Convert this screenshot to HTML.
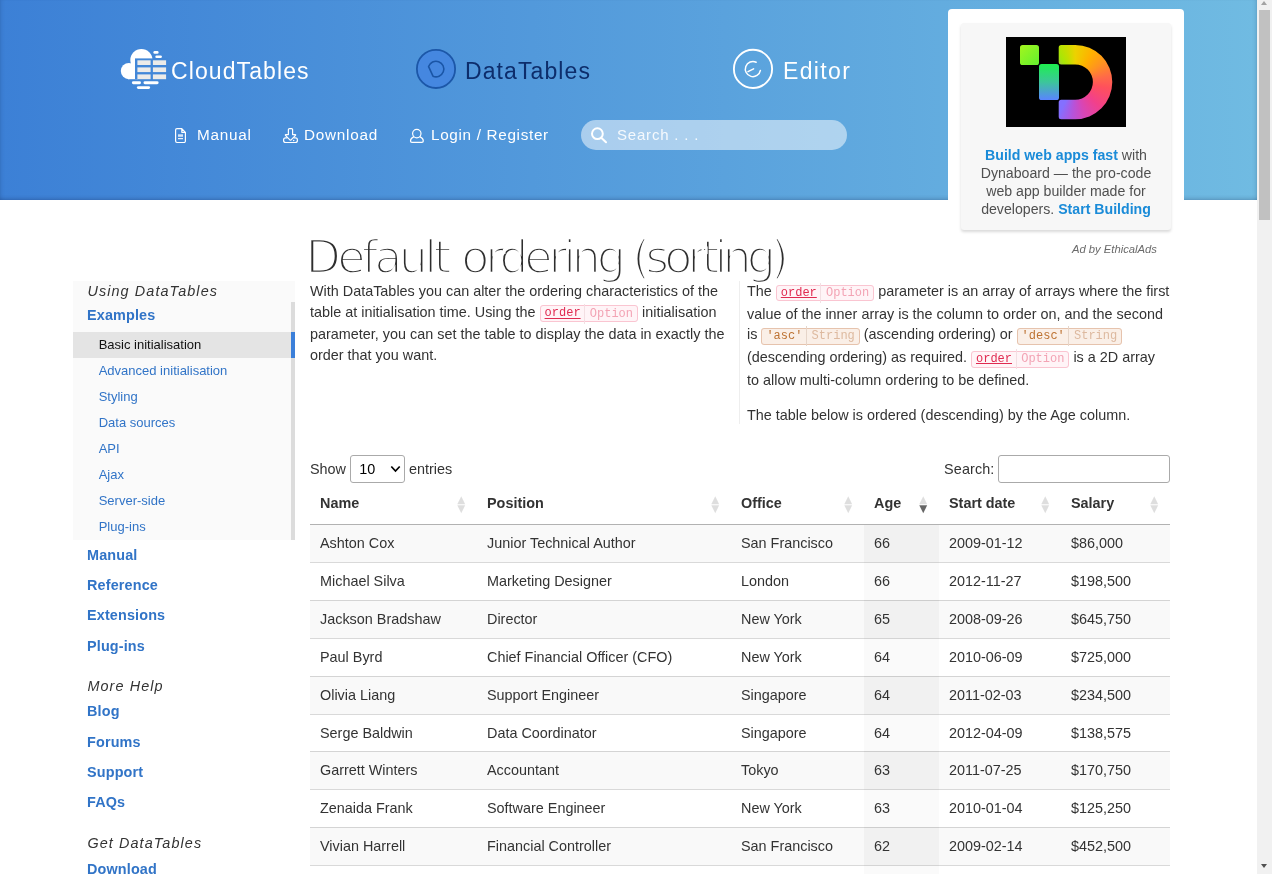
<!DOCTYPE html>
<html lang="en">
<head>
<meta charset="utf-8">
<title>DataTables example - Default ordering (sorting)</title>
<style>
*{box-sizing:border-box}
html,body{margin:0;padding:0}
body{width:1272px;height:874px;overflow:hidden;position:relative;background:#fff;
  font-family:"Liberation Sans",Arial,Helvetica,sans-serif;font-size:14.4px;line-height:20.88px;color:#333}
a{color:#3174c7;text-decoration:none}
#page{position:absolute;left:0;top:0;width:1257px;height:874px;overflow:hidden;background:#fff;will-change:transform}

/* header */
#hdr{position:absolute;left:0;top:0;width:1257px;height:200px;
  background:linear-gradient(to right,#3c80d6 0%,#70bbe2 100%);
  box-shadow:inset 0 -4px 4px -3px rgba(0,0,40,.22),inset 4px 0 4px -3px rgba(0,0,40,.12),inset -4px 0 4px -3px rgba(0,0,40,.15)}
.logo{position:absolute;color:#fff;font-size:23px;letter-spacing:1.1px;line-height:30px;white-space:nowrap}
.logo svg{position:absolute}
.nav{position:absolute;top:124px;color:#fff;font-size:15.3px;letter-spacing:.75px;line-height:22px;white-space:nowrap}
.nav svg{position:absolute}
#hsearch{position:absolute;left:581px;top:120px;width:266px;height:30px;border-radius:15px;background:rgba(255,255,255,.5);
  color:rgba(255,255,255,.88);font-size:15px;letter-spacing:.8px;line-height:30px;padding-left:36px}
#hsearch svg{position:absolute;left:8px;top:6px}


/* sidebar */
#side{position:absolute;left:73px;top:281px;width:222px}
#side .grp{background:#fafafa;position:relative}
#side .grp .it{margin-top:-1.3px}
#side .grp div.sub{margin-top:1.1px}
#side h3{margin:0;font-weight:normal;font-style:italic;font-size:14.4px;letter-spacing:1.1px;line-height:20.88px;padding:0 0 0 14.4px;color:#333}
#side .it{display:block;font-weight:bold;font-size:14.4px;line-height:20.88px;padding:4.73px 0 4.73px 14px;letter-spacing:.15px;color:#3174c7}
#side .bar{position:absolute;right:0;top:21px;bottom:0;width:4px;background:#dcdcdc}
#side .sub a{display:block;font-size:13px;line-height:18.2px;padding:3.9px 0 3.9px 25.7px;color:#3174c7}
#side .sub a.act{background:#e4e4e4;color:#111;position:relative}
#side .sub a.act:after{content:"";position:absolute;right:0;top:0;bottom:0;width:4px;background:#3b7fd9;z-index:2}
#side .gap{height:14.6px}


/* main */
#main{position:absolute;left:310px;top:0;width:860px}
h1{position:absolute;left:0;top:227px;margin:0;font-family:"DejaVu Sans","Liberation Sans",sans-serif;font-weight:normal;font-size:46px;line-height:60px;color:#2e2e2e;white-space:nowrap;-webkit-text-stroke:2.5px #fff}
h1 span{position:absolute;top:0}
.col{position:absolute;top:280.7px;white-space:nowrap;font-size:14.4px;line-height:20.88px;color:#333}
.col p{margin:0 0 14.4px 0}
#c1{left:0;width:430px;padding-right:14px}
#c2{left:429px;width:437px;padding-left:7px;border-left:1px solid #eee;height:143px}
code{font-family:"Liberation Mono","Courier New",monospace;font-size:12px;border:1px solid;border-radius:3px;padding:0.2px 4px;white-space:nowrap}
code i{font-style:normal;border-left:1px solid;margin-left:3.6px;padding:3px 0 3px 4.6px}
code.opt{background:#fff4f7;border-color:#fac5d1;color:#e02a50}
code.opt u{text-decoration:underline}
code.opt i{color:#f3a3b4;border-color:#f3dfe3}
code.str{background:#faefe7;border-color:#e6c3ad;color:#bd7333}
code.str i{color:#ddb99f;border-color:#e6d5c9}
#ctl{position:absolute;left:0;top:455px;width:860px;height:28px;font-size:14.4px;line-height:28px;color:#333}
#ctl .sel{position:absolute;left:40px;top:0;width:55px;height:28px;border:1px solid #aaa;border-radius:3px;background:#fff;padding-left:8.3px;line-height:26px;color:#000}
#ctl .sel svg{position:absolute;right:3px;top:9px}
#ctl .inp{position:absolute;right:0;top:0;width:172px;height:28px;border:1px solid #aaa;border-radius:3px;background:#fff}
table{position:absolute;left:0;top:483.25px;width:860px;border-collapse:separate;border-spacing:0;font-size:14.4px;line-height:20.88px;color:#333;table-layout:fixed}
th{text-align:left;font-weight:bold;padding:10px;border-bottom:1px solid rgba(0,0,0,.3);position:relative}
th:before,th:after{position:absolute;right:11.7px;font-family:"DejaVu Sans",sans-serif;font-size:10.4px;line-height:9px;color:#000;opacity:.125;font-weight:normal}
th:before{content:"\25B2";bottom:calc(50% - .1px)}
th:after{content:"\25BC";top:calc(50% + .1px)}
th.desc:after{opacity:.6}
td{padding:8px 10px;border-top:1px solid rgba(0,0,0,.15)}
tbody tr:first-child td{border-top:0}
tbody tr:nth-child(odd) td{background:#f9f9f9}
tbody tr:nth-child(odd) td.s{background:#f1f1f1}
tbody tr:nth-child(even) td.s{background:#fafafa}


/* ad */
#adw{position:absolute;left:948px;top:9px;width:236px;height:240px;background:#fff;border-radius:4px}
#adb{position:absolute;left:961px;top:23px;width:210px;height:207px;background:#f7f7f7;border-radius:3px;box-shadow:0 2px 3px rgba(0,0,0,.15)}
#adimg{position:absolute;left:45px;top:14px;width:120px;height:90px;background:#000;overflow:hidden}
#adimg div{position:absolute}
#adt{position:absolute;left:0;top:123px;width:210px;text-align:center;font-size:14.15px;line-height:18px;color:#505050;white-space:nowrap}
#adt b{color:#1a8bd8}
#adby{position:absolute;right:100px;top:242px;font-size:11.25px;font-style:italic;line-height:14px;color:#6a6a6a;white-space:nowrap}

/* scrollbar */
#sb{position:absolute;left:1257px;top:0;width:15px;height:874px;background:#f1f1f1}
#sb .thumb{position:absolute;left:2px;top:10px;width:11px;height:210px;background:#c1c1c1}
#sb .up,#sb .dn{position:absolute;left:3.8px;width:0;height:0;border-left:3.7px solid transparent;border-right:3.7px solid transparent}
#sb .up{top:1px;border-bottom:4.2px solid #a3a3a3}
#sb .dn{bottom:5.8px;border-top:4.4px solid #505050}
</style>
</head>
<body>
<div id="page">

<div id="hdr">
  <div class="logo" id="lg-ct" style="left:171px;top:56px"><svg style="left:-51px;top:-8px" width="48" height="43" viewBox="120 48 48 43">
 <g fill="#fff">
  <circle cx="141.4" cy="60.1" r="11.1"/>
  <circle cx="128.9" cy="71.1" r="8.1"/>
  <rect x="128" y="64" width="10" height="15.2"/>
  <rect x="153.4" y="51.1" width="5.2" height="2.6" rx="1.3"/>
  <rect x="155.3" y="55.6" width="6.6" height="2.5" rx="1.25"/>
  <rect x="131.9" y="81.3" width="9.1" height="2.9" rx="1.45"/>
  <rect x="143.5" y="81.3" width="15.1" height="2.9" rx="1.45"/>
  <rect x="136.9" y="86.2" width="13.2" height="2.8" rx="1.4"/>
 </g>
 <rect x="135" y="58.4" width="33" height="20.8" fill="#4287d8"/>
 <g fill="#ecebe9">
  <rect x="137.4" y="60.3" width="13.2" height="4.7"/><rect x="152.9" y="60.3" width="13.2" height="4.7"/>
  <rect x="137.4" y="67.4" width="13.2" height="4.7"/><rect x="152.9" y="67.4" width="13.2" height="4.7"/>
  <rect x="137.4" y="74.4" width="13.2" height="4.8"/><rect x="152.9" y="74.4" width="13.2" height="4.8"/>
 </g>
</svg>CloudTables</div>
  <div class="logo" id="lg-dt" style="left:465px;top:56px;color:#0d2d6b"><svg style="left:-51px;top:-9px" width="44" height="44" viewBox="414 47 44 44">
 <circle cx="436" cy="68.9" r="19.1" fill="#4587e0" stroke="#1c57a8" stroke-width="1.8"/>
 <path d="M428.6 66.6 A7.8 7.8 0 1 1 433 76.2 Z" fill="none" stroke="#1a55a6" stroke-width="1.6" stroke-linejoin="round"/>
</svg>DataTables</div>
  <div class="logo" id="lg-ed" style="left:783px;top:56px;letter-spacing:1.35px"><svg style="left:-52px;top:-9px" width="44" height="44" viewBox="731 47 44 44">
 <circle cx="753" cy="68.9" r="19.1" fill="none" stroke="#fff" stroke-width="1.9"/>
 <path d="M756.2 62.2 A7.6 7.6 0 1 0 760.4 70.4 M748 71.6 L753.6 68.8" fill="none" stroke="#fff" stroke-width="1.5" stroke-linecap="round"/>
</svg>Editor</div>
  <div class="nav" id="nv-man" style="left:197px"><svg style="left:-23px;top:3px" width="13" height="17" viewBox="174 127 13 17">
 <path d="M177 128.7 h4.8 l3.6 3.6 v8.8 a1.4 1.4 0 0 1 -1.4 1.4 h-7 a1.4 1.4 0 0 1 -1.4 -1.4 v-11 a1.4 1.4 0 0 1 1.4 -1.4 z M181.8 128.7 v3.6 h3.6" fill="none" stroke="#fff" stroke-width="1.2" stroke-linejoin="round"/>
 <rect x="178" y="134.3" width="5" height="2.5" fill="#fff" opacity=".78"/>
 <rect x="178" y="138.1" width="5" height="1.1" fill="#fff"/>
</svg>Manual</div>
  <div class="nav" id="nv-dl" style="left:304px"><svg style="left:-22px;top:3px" width="17" height="17" viewBox="282 127 17 17">
 <g fill="none" stroke="#fff" stroke-width="1.2" stroke-linejoin="round" stroke-linecap="round">
 <path d="M288.4 134.6 v-5 a1 1 0 0 1 1 -1 h2.2 a1 1 0 0 1 1 1 v5 h2.6 q.7 .1 .3 .7 l-4.6 4.8 q-.4 .3 -.8 0 l-4.6 -4.8 q-.4 -.6 .3 -.7 z"/>
 <path d="M287 137.8 h-1.4 a2 2 0 0 0 -2 2 v.7 a2 2 0 0 0 2 2 h9.8 a2 2 0 0 0 2 -2 v-.7 a2 2 0 0 0 -2 -2 h-1.4"/>
 </g>
 <circle cx="293.7" cy="140.4" r=".75" fill="#fff"/>
</svg>Download</div>
  <div class="nav" id="nv-lg" style="left:431px;letter-spacing:.67px"><svg style="left:-22px;top:3px" width="17" height="17" viewBox="409 127 17 17">
 <g fill="none" stroke="#fff" stroke-width="1.2" stroke-linecap="round" stroke-linejoin="round">
 <circle cx="416.8" cy="133.6" r="4.2"/>
 <path d="M413.5 136.9 C411.6 137.9 410.5 139.6 410.5 141 C410.5 142 411 142.4 412 142.4 H421.8 C422.8 142.4 423.3 142 423.3 141 C423.3 139.6 422.2 137.9 420.2 136.9"/>
 </g>
</svg>Login / Register</div>
  <div id="hsearch"><svg width="20" height="18" viewBox="589 126 20 18"><circle cx="597.4" cy="133.7" r="5.4" fill="none" stroke="#fff" stroke-width="2"/><path d="M601.5 138 L606 142.2" stroke="#fff" stroke-width="2.1" stroke-linecap="round"/></svg>Search . . .</div>
</div>

<div id="side">
  <div class="grp">
    <h3>Using DataTables</h3>
    <div class="bar"></div>
    <a class="it">Examples</a>
    <div class="sub">
      <a class="act">Basic initialisation</a>
      <a>Advanced initialisation</a>
      <a>Styling</a>
      <a>Data sources</a>
      <a>API</a>
      <a>Ajax</a>
      <a>Server-side</a>
      <a>Plug-ins</a>
    </div>
  </div>
  <a class="it">Manual</a>
  <a class="it">Reference</a>
  <a class="it">Extensions</a>
  <a class="it">Plug-ins</a>
  <div class="gap"></div>
  <h3>More Help</h3>
  <a class="it">Blog</a>
  <a class="it">Forums</a>
  <a class="it">Support</a>
  <a class="it">FAQs</a>
  <div class="gap" style="height:15.3px"></div>
  <h3>Get DataTables</h3>
  <a class="it">Download</a>
</div>
<div id="main">
  <h1><span id="t1" style="left:-4.6px;letter-spacing:-3.67px">Default</span> <span id="t2" style="left:151.2px;letter-spacing:-4.13px">ordering</span> <span id="t3" style="left:322.2px;letter-spacing:-4.92px">(sorting)</span></h1>
  <div class="col" id="c1">
    <p>With DataTables you can alter the ordering characteristics of the<br>
table at initialisation time. Using the <code class="opt"><u>order</u><i>Option</i></code> initialisation<br>
parameter, you can set the table to display the data in exactly the<br>
order that you want.</p>
  </div>
  <div class="col" id="c2">
    <p>The <code class="opt"><u>order</u><i>Option</i></code> parameter is an array of arrays where the first<br>
value of the inner array is the column to order on, and the second<br>
is <code class="str">'asc'<i>String</i></code> (ascending ordering) or <code class="str">'desc'<i>String</i></code><br>
(descending ordering) as required. <code class="opt"><u>order</u><i>Option</i></code> is a 2D array<br>
to allow multi-column ordering to be defined.</p>
    <p>The table below is ordered (descending) by the Age column.</p>
  </div>
  <div id="ctl">Show <span class="sel">10<svg width="11" height="8" viewBox="0 0 11 8"><path d="M1.3 1.5 L5.5 6 L9.7 1.5" fill="none" stroke="#000" stroke-width="1.7"/></svg></span><span style="position:absolute;left:99px">entries</span>
    <span style="position:absolute;right:175.6px;letter-spacing:.1px">Search:</span><span class="inp"></span></div>
  <table>
    <colgroup><col style="width:167px"><col style="width:254px"><col style="width:133px"><col style="width:75px"><col style="width:122px"><col style="width:109px"></colgroup>
    <thead><tr><th>Name</th><th>Position</th><th>Office</th><th class="desc">Age</th><th>Start date</th><th>Salary</th></tr></thead>
    <tbody>
<tr><td>Ashton Cox</td><td>Junior Technical Author</td><td>San Francisco</td><td class="s">66</td><td>2009-01-12</td><td>$86,000</td></tr>
<tr><td>Michael Silva</td><td>Marketing Designer</td><td>London</td><td class="s">66</td><td>2012-11-27</td><td>$198,500</td></tr>
<tr><td>Jackson Bradshaw</td><td>Director</td><td>New York</td><td class="s">65</td><td>2008-09-26</td><td>$645,750</td></tr>
<tr><td>Paul Byrd</td><td>Chief Financial Officer (CFO)</td><td>New York</td><td class="s">64</td><td>2010-06-09</td><td>$725,000</td></tr>
<tr><td>Olivia Liang</td><td>Support Engineer</td><td>Singapore</td><td class="s">64</td><td>2011-02-03</td><td>$234,500</td></tr>
<tr><td>Serge Baldwin</td><td>Data Coordinator</td><td>Singapore</td><td class="s">64</td><td>2012-04-09</td><td>$138,575</td></tr>
<tr><td>Garrett Winters</td><td>Accountant</td><td>Tokyo</td><td class="s">63</td><td>2011-07-25</td><td>$170,750</td></tr>
<tr><td>Zenaida Frank</td><td>Software Engineer</td><td>New York</td><td class="s">63</td><td>2010-01-04</td><td>$125,250</td></tr>
<tr><td>Vivian Harrell</td><td>Financial Controller</td><td>San Francisco</td><td class="s">62</td><td>2009-02-14</td><td>$452,500</td></tr>
<tr><td>Timothy Mooney</td><td>Office Manager</td><td>London</td><td class="s">37</td><td>2008-12-11</td><td>$136,200</td></tr>
    </tbody>
  </table>
</div>
<div id="adw"></div>
<div id="adb">
  <div id="adimg">
    <div style="left:13.9px;top:8px;width:19.3px;height:19.5px;border-radius:2.6px;background:linear-gradient(135deg,#a4f51e,#62f02f)"></div>
    <div style="left:33.2px;top:27.3px;width:19.5px;height:35.5px;border-radius:2.6px;background:linear-gradient(180deg,#1ef04e 0%,#3cc69a 50%,#5a84ff 100%)"></div>
    <div style="left:0;top:0;width:120px;height:90px;background:conic-gradient(from 0deg at 69.2px 45.1px,#ecd200 0deg,#ffb000 30deg,#ff9320 55deg,#ff6a48 80deg,#ff505c 100deg,#f2408a 135deg,#d646b8 165deg,#b454dc 185deg,#8470ff 207deg,#8470ff 270deg,#a8e606 330deg,#c6de00 345deg,#ecd200 360deg);clip-path:path('M55.2 8 H69.2 A37.1 37.1 0 0 1 69.2 82.2 H55.2 A2.5 2.5 0 0 1 52.7 79.7 V65.3 A2.5 2.5 0 0 1 55.2 62.8 H69.2 A17.7 17.7 0 0 0 69.2 27.4 H55.2 A2.5 2.5 0 0 1 52.7 24.9 V10.5 A2.5 2.5 0 0 1 55.2 8 Z')"></div>
  </div>
  <div id="adt"><b>Build web apps fast</b> with<br>Dynaboard — the pro-code<br>web app builder made for<br>developers. <b>Start Building</b></div>
</div>
<div id="adby">Ad by EthicalAds</div>

</div>
<div id="sb"><div class="up"></div><div class="thumb"></div><div class="dn"></div></div>
</body>
</html>
